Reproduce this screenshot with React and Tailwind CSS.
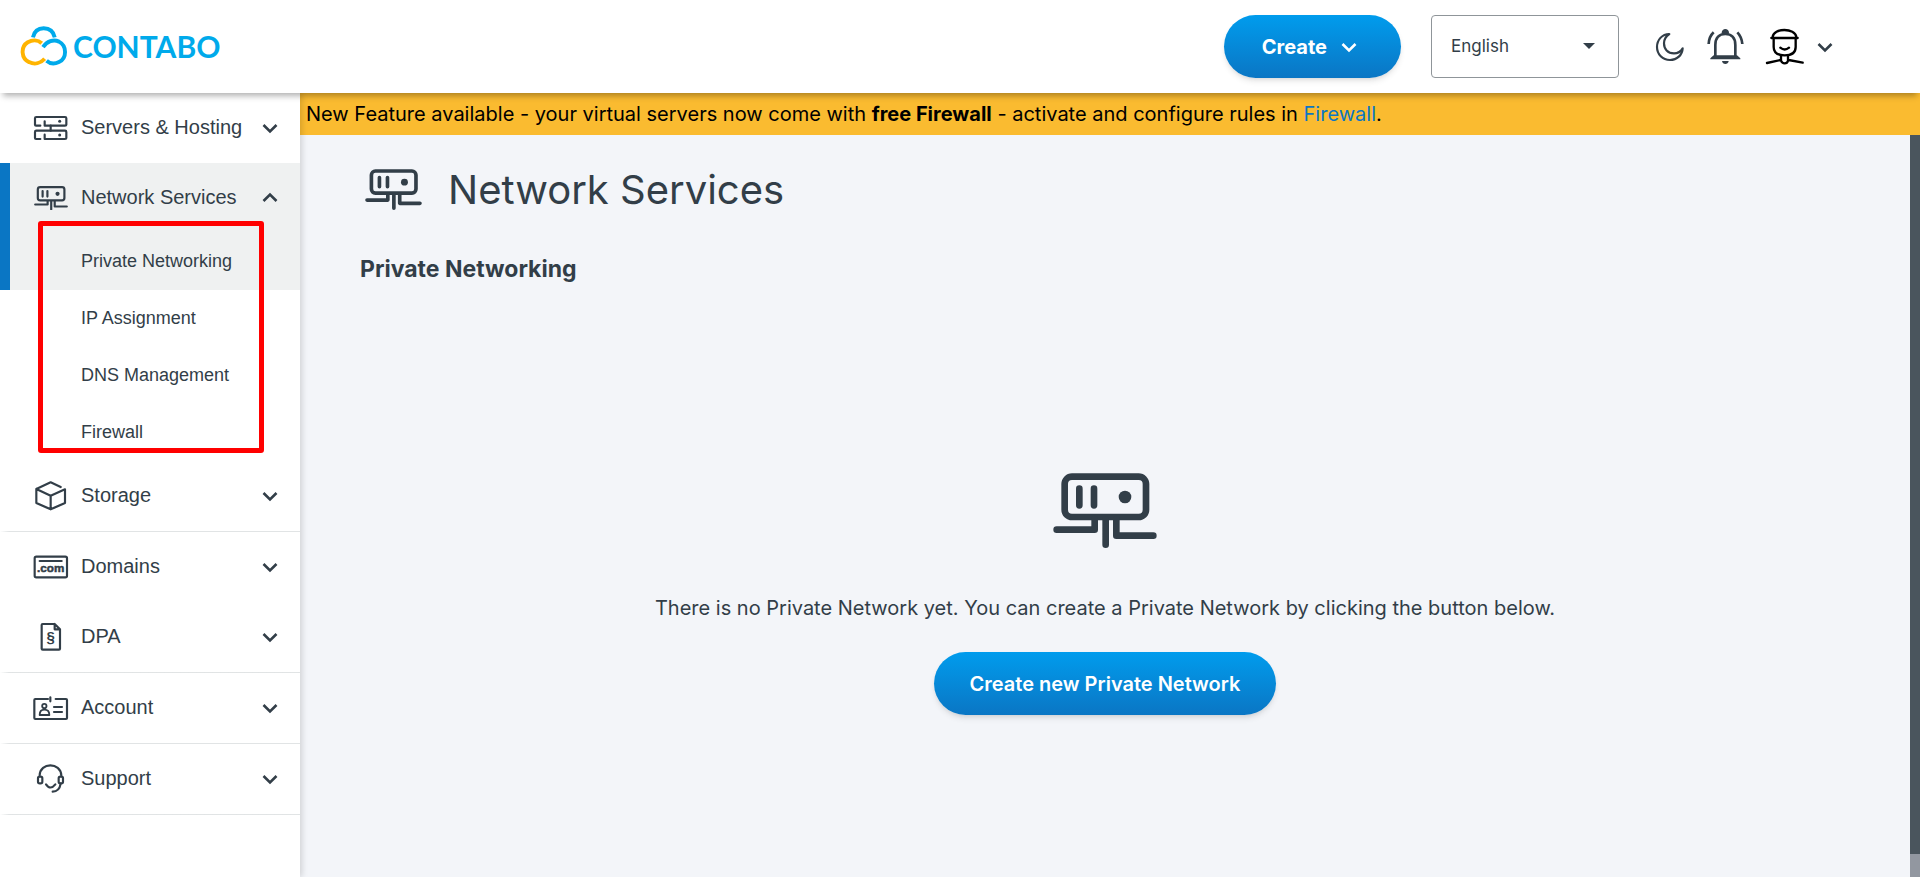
import React, { useState } from 'react';
import clsx from 'clsx';

/* ---------- Icons ---------- */

function NetworkIcon({ className }) {
	return (
		<svg
			viewBox="69 70 312 226"
			className={className}
			fill="none"
			stroke="currentColor"
			strokeWidth="20"
			strokeLinecap="round"
			strokeLinejoin="round"
			aria-hidden="true"
		>
			<rect x="104" y="81" width="244" height="121" rx="22" />
			<path d="M148 117V167M192 117V167" />
			<circle cx="285" cy="142" r="19" fill="currentColor" stroke="none" />
			<path d="M194 208V240H80M227 210V285M259 208V258H370" />
		</svg>
	);
}

function MenuIcon({ viewBox, children }) {
	return (
		<svg
			viewBox={viewBox}
			className="size-9 shrink-0"
			fill="none"
			stroke="currentColor"
			strokeWidth="6.5"
			strokeLinecap="round"
			strokeLinejoin="round"
			aria-hidden="true"
		>
			{children}
		</svg>
	);
}

const ServersIcon = () => (
	<MenuIcon viewBox="0 0 108 108">
		<path d="M22 47H9Q6 47 6 44V25Q6 21 10 21H96Q100 21 100 25V44Q100 47 96 47H35V34" />
		<path d="M22 87H9Q6 87 6 84V66Q6 62 10 62H96Q100 62 100 66V84Q100 87 96 87H35V74" />
		<path d="M53 47V62" />
		<circle cx="80" cy="34" r="4.5" fill="currentColor" stroke="none" />
		<circle cx="80" cy="75" r="4.5" fill="currentColor" stroke="none" />
	</MenuIcon>
);

const StorageIcon = () => (
	<MenuIcon viewBox="99 54 108 108">
		<path d="M182 81L152 67L109 87V129L152 148L195 129V88L152 107V148M109 87L152 107" />
	</MenuIcon>
);

const DomainsIcon = () => (
	<MenuIcon viewBox="99 267 108 108">
		<rect x="104" y="290" width="97" height="62" rx="5" />
		<path d="M119 303H185" />
		<text
			x="152"
			y="336"
			textAnchor="middle"
			fontSize="35"
			fill="currentColor"
			stroke="currentColor"
			strokeWidth="1.5"
			className="font-['Liberation_Sans',sans-serif] font-bold"
		>
			.com
		</text>
	</MenuIcon>
);

const DpaIcon = () => (
	<MenuIcon viewBox="99 477 108 108">
		<path d="M164 492H128Q125 492 125 495V566Q125 569 128 569H177Q180 569 180 566V508L164 492V508H180" />
		<text
			x="152"
			y="546"
			textAnchor="middle"
			fontSize="45"
			fill="currentColor"
			stroke="none"
			className="font-['Liberation_Sans',sans-serif] font-bold"
		>
			§
		</text>
	</MenuIcon>
);

const AccountIcon = () => (
	<MenuIcon viewBox="99 690 108 108">
		<path d="M144 717H106Q103 717 103 720V774Q103 777 106 777H198Q201 777 201 774V720Q201 717 198 717H167M151 712V724" />
		<circle cx="133" cy="738" r="6.5" strokeWidth="5.5" />
		<path d="M119 765Q119 749 133 749Q148 749 148 765Z" strokeWidth="5.5" />
		<path d="M162 741H186M162 756H186" />
	</MenuIcon>
);

const SupportIcon = () => (
	<MenuIcon viewBox="99 903 108 108">
		<path d="M119 946C120 906 182 906 184 946" />
		<rect x="114" y="950" width="13" height="20" rx="5" />
		<rect x="176" y="950" width="13" height="20" rx="5" />
		<path d="M138 973Q151 992 166 973M182 971Q178 995 158 995" />
	</MenuIcon>
);

function Chevron({ className }) {
	return (
		<svg
			viewBox="0 0 16 16"
			className={clsx('size-4 shrink-0', className)}
			fill="none"
			stroke="currentColor"
			strokeWidth="2.6"
			aria-hidden="true"
		>
			<path d="M1.5 5L8 11.5L14.5 5" />
		</svg>
	);
}

function MoonIcon() {
	return (
		<svg
			viewBox="75 93 90 90"
			className="size-[30px]"
			fill="none"
			stroke="currentColor"
			strokeWidth="6.5"
			strokeLinejoin="round"
			aria-hidden="true"
		>
			<path d="M118 99C96 99 81 117 81 138C81 160 98 177 120 177C141 177 157 162 158 142C151 154 142 157 132 157C113 157 102 144 102 127C102 115 107 106 118 99Z" />
		</svg>
	);
}

function BellIcon() {
	return (
		<svg viewBox="230 84 111 111" className="size-[37px]" fill="none" stroke="currentColor" strokeWidth="8" aria-hidden="true">
			<path d="M255 168V135C255 113 267 102 285 102C303 102 315 113 315 135V168" />
			<path d="M250 166H320L330 175V178H240V175Z" fill="currentColor" stroke="none" />
			<path d="M274 101C272 82 298 82 296 101Z" fill="currentColor" stroke="none" />
			<path d="M275 183H295C294 195 276 195 275 183Z" fill="currentColor" stroke="none" />
			<path d="M235 132Q236 110 250 97M336 132Q334 110 321 97" />
		</svg>
	);
}

function AvatarIcon() {
	return (
		<svg
			viewBox="405 80 120 120"
			className="size-10"
			fill="none"
			stroke="#000"
			strokeWidth="7"
			strokeLinecap="round"
			strokeLinejoin="round"
			aria-hidden="true"
		>
			<path d="M428 110C430 82 496 82 499 110M424 113H503" />
			<path d="M431 115V140C431 158 445 165 464 165C484 165 497 158 497 140V115" />
			<path d="M451 142Q464 153 477 142M453 166V181Q456 189 464 189Q472 189 474 181V166M411 188L451 179M476 179L518 187" />
		</svg>
	);
}

function Logo() {
	return (
		<a href="#home" className="flex items-center gap-[5px] pb-[2px] text-[#00aaeb]">
			<svg viewBox="59 77 144 123" className="h-10 w-12" fill="none" strokeWidth="12" aria-hidden="true">
				<path d="M97 112C101 93 114 84 130 84C147 84 160 93 164 112" stroke="currentColor" />
				<path d="M124 130C112 119 94 120 81 127C58 141 61 178 85 188C102 196 121 192 133 178" stroke="#ffb400" />
				<path d="M128 142C140 124 160 117 177 125C202 138 202 176 177 188C164 194 149 193 139 184" stroke="currentColor" />
			</svg>
			<span className="font-['Lato',sans-serif] text-[30px] leading-9 font-bold">CONTABO</span>
		</a>
	);
}

/* ---------- Data ---------- */

const menu = [
	{ name: 'Servers & Hosting', icon: <ServersIcon /> },
	{
		name: 'Network Services',
		icon: (
			<span className="flex w-9 shrink-0 justify-center">
				<NetworkIcon className="w-[34px]" />
			</span>
		),
		children: ['Private Networking', 'IP Assignment', 'DNS Management', 'Firewall'],
	},
	{ name: 'Storage', icon: <StorageIcon />, divider: true },
	{ name: 'Domains', icon: <DomainsIcon /> },
	{ name: 'DPA', icon: <DpaIcon />, divider: true },
	{ name: 'Account', icon: <AccountIcon />, divider: true },
	{ name: 'Support', icon: <SupportIcon />, divider: true },
];

/* ---------- Layout ---------- */

function Header() {
	return (
		<header className="relative z-20 flex h-[93px] shrink-0 items-center justify-between bg-white pr-[87px] pl-5 shadow-[0_6px_6px_-3px_rgba(0,0,0,0.3)]">
			<Logo />
			<div className="flex items-center">
				<button
					type="button"
					className="flex h-[63px] items-center gap-[14px] rounded-full bg-linear-to-b from-[#009ced] to-[#0a76c4] pr-11 pl-[38px] text-xl font-bold text-white shadow-md"
				>
					Create
					<Chevron />
				</button>
				<div className="relative ml-[30px]">
					<select
						aria-label="Language"
						className="h-[63px] w-[188px] appearance-none rounded-[4px] border border-[#8f9599] bg-white px-[19px] text-[17px] text-[#323e48]"
					>
						<option>English</option>
					</select>
					<svg viewBox="0 0 12 6" className="pointer-events-none absolute top-7 right-6 w-3" aria-hidden="true">
						<path d="M0 0H12L6 6Z" fill="currentColor" />
					</svg>
				</div>
				<button type="button" aria-label="Dark mode" className="ml-9">
					<MoonIcon />
				</button>
				<button type="button" aria-label="Notifications" className="ml-[22px]">
					<BellIcon />
				</button>
				<button type="button" aria-label="Profile" className="ml-[21px] flex items-center gap-3">
					<AvatarIcon />
					<Chevron />
				</button>
			</div>
		</header>
	);
}

function Sidebar() {
	const [open, setOpen] = useState('Network Services');

	return (
		<nav className="relative z-10 w-[300px] shrink-0 bg-white font-['Liberation_Sans',sans-serif] shadow-[2px_0_6px_rgba(0,0,0,0.15)]">
			{menu.map(item => {
				const active = item.name === open;
				return (
					<div key={item.name}>
						<button
							type="button"
							onClick={() => setOpen(active ? '' : item.name)}
							className={clsx(
								'flex h-[70px] w-full items-center gap-3 border-l-10 pr-[22px] pl-[23px] text-left text-xl',
								active ? 'border-[#0a76c4] bg-[#eff1f1]' : 'border-transparent'
							)}
						>
							{item.icon}
							<span className="grow pb-[2px]">{item.name}</span>
							<Chevron className={active ? 'rotate-180' : ''} />
						</button>
						{active && item.children && (
							<ul className="relative text-lg">
								{item.children.map((child, i) => (
									<li key={child}>
										<a
											href="#network"
											className={clsx(
												'flex h-[57px] items-center border-l-10 pb-[2px] pl-[71px]',
												i === 0 ? 'border-[#0a76c4] bg-[#eff1f1]' : 'border-transparent'
											)}
										>
											{child}
										</a>
									</li>
								))}
								{/* highlight frame around the submenu */}
								<li
									aria-hidden="true"
									className="pointer-events-none absolute -top-3 right-9 bottom-2 left-[38px] rounded-[3px] border-5 border-[#ff0000]"
								></li>
							</ul>
						)}
						{item.divider && <div className="h-px bg-linear-to-r from-white to-[#e1e4e5] to-3%"></div>}
					</div>
				);
			})}
		</nav>
	);
}

function App() {
	return (
		<div className="flex h-screen flex-col overflow-hidden bg-[#f3f5f9] font-['Inter',sans-serif] text-[#323e48]">
			<Header />
			<div className="flex min-h-0 grow">
				<Sidebar />
				<div className="flex min-w-0 grow flex-col">
					<p className="h-[42px] shrink-0 bg-[#fabb30] px-[6px] text-xl leading-[42px] text-black">
						New Feature available - your virtual servers now come with <b>free Firewall</b> - activate and configure
						rules in{' '}
						<a href="#firewall" className="text-[#0a76c4]">
							Firewall
						</a>
						.
					</p>
					<div className="flex min-h-0 grow">
						<main className="grow px-[60px] pt-7">
							<h1 className="flex items-center gap-[26px] pl-[5px] text-[40px] leading-[54px] font-normal">
								<NetworkIcon className="w-[57px]" />
								Network Services
							</h1>
							<h2 className="mt-9 text-[23px] leading-8 font-bold">Private Networking</h2>
							<section className="mt-[188px] flex flex-col items-center">
								<NetworkIcon className="w-[104px]" />
								<p className="mt-11 text-xl leading-8">
									There is no Private Network yet. You can create a Private Network by clicking the button below.
								</p>
								<button
									type="button"
									className="mt-7 h-[63px] rounded-full bg-linear-to-b from-[#009ced] to-[#0a76c4] px-9 text-xl font-semibold text-white shadow-md"
								>
									Create new Private Network
								</button>
							</section>
						</main>
						{/* scroll track */}
						<div className="flex w-[10px] shrink-0 flex-col bg-[#9297a0] pb-[23px]">
							<div className="grow bg-[#4a555d]"></div>
						</div>
					</div>
				</div>
			</div>
		</div>
	);
}

export default App;
